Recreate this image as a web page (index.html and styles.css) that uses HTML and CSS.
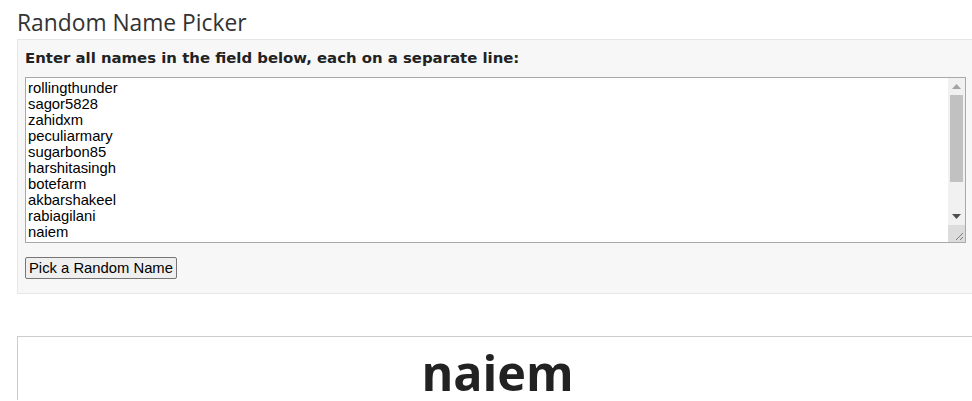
FILE: index.html
```html
<!DOCTYPE html>
<html>
<head>
<meta charset="utf-8">
<link rel="stylesheet" href="styles.css">
</head>
<body>
<div class="page">
  <h1 class="title">Random Name Picker</h1>
  <div class="panel">
    <label class="label" for="names">Enter all names in the field below, each on a separate line:</label>
    <div class="field">
      <textarea id="names" class="names" spellcheck="false">rollingthunder
sagor5828
zahidxm
peculiarmary
sugarbon85
harshitasingh
botefarm
akbarshakeel
rabiagilani
naiem
shuvo
mithu
rakib</textarea>
      <div class="scrollbar">
        <div class="sb-btn"><svg width="9" height="5" viewBox="0 0 9 5"><path d="M0 5 L4.5 0 L9 5 Z" fill="#a3a3a3"/></svg></div>
        <div class="sb-track"><div class="sb-thumb"></div></div>
        <div class="sb-btn"><svg width="9" height="5" viewBox="0 0 9 5"><path d="M0 0 L9 0 L4.5 5 Z" fill="#505050"/></svg></div>
      </div>
      <div class="resizer"><svg width="17" height="17" viewBox="0 0 17 17"><path d="M15 8 L8 15 M15 12 L12 15" stroke="#7a7a7a" stroke-width="1"/></svg></div>
    </div>
    <button class="pick">Pick a Random Name</button>
  </div>
  <div class="result">naiem</div>
</div>
</body>
</html>
```

FILE: styles.css
```css
html, body {
  margin: 0;
  padding: 0;
  background: #ffffff;
  overflow: hidden;
}
.page {
  width: 961px;
  margin-left: 17px;
  color: #333333;
}
.title {
  margin: 0;
  padding-top: 10px;
  font-family: "Open Sans", sans-serif;
  font-weight: 400;
  font-size: 22.8px;
  line-height: 25px;
  color: #333333;
  box-sizing: border-box;
  height: 39px;
  white-space: nowrap;
}
.panel {
  background: #f7f7f7;
  border: 1px solid #e6e6e6;
  padding: 8px 8px 13px 7px;
  box-sizing: border-box;
  height: 255px;
}
.label {
  display: block;
  font-family: "DejaVu Sans", sans-serif;
  font-weight: bold;
  font-size: 14.9px;
  line-height: 20px;
  color: #222222;
  margin-bottom: 9px;
  white-space: nowrap;
}
.field {
  position: relative;
  width: 941px;
  height: 166px;
}
.names {
  display: block;
  width: 941px;
  height: 166px;
  box-sizing: border-box;
  margin: 0;
  border: 1px solid #a9a9a9;
  padding: 2px 20px 2px 2px;
  font-family: "Liberation Sans", Arial, sans-serif;
  font-size: 14.8px;
  line-height: 16px;
  color: #000000;
  background: #ffffff;
  resize: none;
  overflow: hidden;
  outline: none;
}
.scrollbar {
  position: absolute;
  top: 1px;
  right: 1px;
  width: 17px;
  height: 147px;
  background: #f1f1f1;
  display: flex;
  flex-direction: column;
}
.sb-btn {
  height: 17px;
  display: flex;
  align-items: center;
  justify-content: center;
}
.sb-track {
  flex: 1;
  padding: 0 2px;
}
.sb-thumb {
  height: 87px;
  background: #c1c1c1;
}
.resizer {
  position: absolute;
  right: 1px;
  bottom: 1px;
  width: 17px;
  height: 17px;
  background: #dcdcdc;
}
.resizer svg {
  display: block;
}
.pick {
  display: block;
  margin-top: 14px;
  height: 22px;
  padding: 0 3px;
  font-family: "Liberation Sans", Arial, sans-serif;
  font-size: 14.8px;
  line-height: 18px;
  color: #000000;
  background: #efefef;
  border: 1px solid #767676;
  border-radius: 2px;
  white-space: nowrap;
}
.result {
  margin-top: 42px;
  border: 1px solid #cccccc;
  border-bottom: 0;
  padding-top: 7px;
  height: 56px;
  text-align: center;
  font-family: "Open Sans", sans-serif;
  font-weight: bold;
  font-size: 48.5px;
  line-height: 56px;
  color: #222222;
}
```
